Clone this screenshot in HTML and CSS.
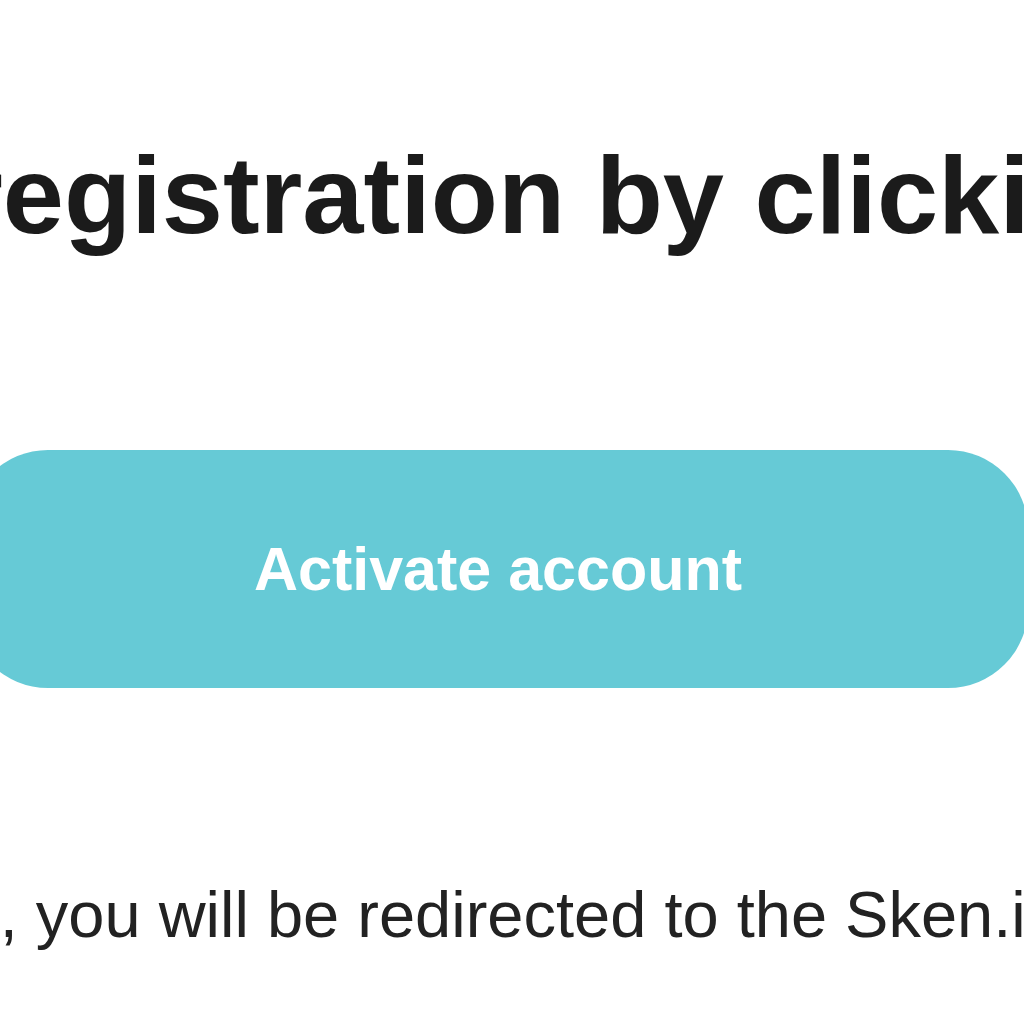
FILE: index.html
```html
<!DOCTYPE html>
<html lang="en">
<head>
    <meta charset="UTF-8">
    <title>Activate your account</title>
    <link rel="stylesheet" href="styles.css">
</head>
<body>
    <div class="mail">
        <h1 class="mail-title">registration by clicking the button below</h1>

        <div class="action-row">
            <a class="activate-btn" href="#">Activate account</a>
        </div>

        <p class="mail-note">account, you will be redirected to the Sken.io website.</p>
    </div>
</body>
</html>
```

FILE: styles.css
```css
body {
    margin: 0;
    background-color: #fff;
    font-family: "Liberation Sans", Arial, sans-serif;
    overflow: hidden;
}

.mail {
    width: 1024px;
    height: 1024px;
    overflow: hidden;
}

.mail-title {
    margin: 132px 0 0 -40px;
    font-size: 110px;
    line-height: 126px;
    font-weight: bold;
    color: #1b1b1b;
    white-space: nowrap;
}

.action-row {
    margin: 192px 0 0 -32px;
}

.activate-btn {
    display: flex;
    justify-content: center;
    align-items: center;
    width: 1060px;
    height: 238px;
    background-color: #66cad6;
    border-radius: 80px;
    color: #fff;
    font-size: 61px;
    font-weight: bold;
    text-decoration: none;
}

.mail-note {
    margin: 189px 0 0 -228px;
    font-size: 65px;
    line-height: 75px;
    color: #222;
    white-space: nowrap;
}
```
